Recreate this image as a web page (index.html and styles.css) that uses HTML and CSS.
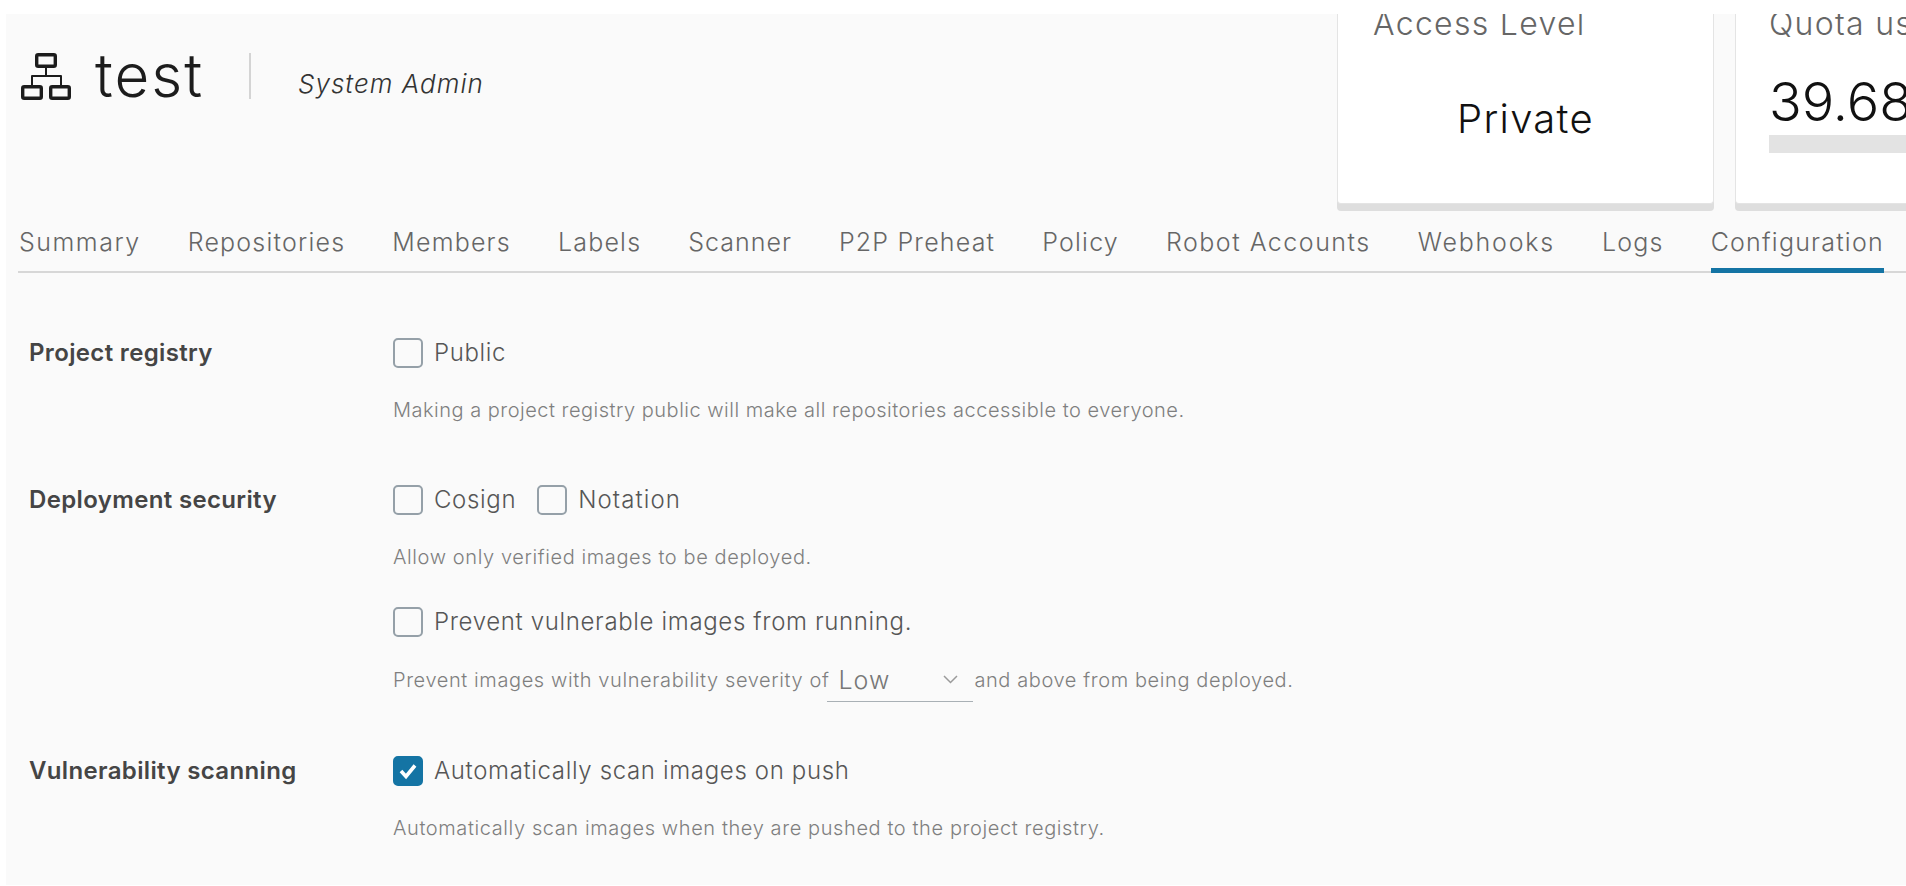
FILE: index.html
```html
<!DOCTYPE html>
<html lang="en">
<head>
<meta charset="utf-8">
<title>test - Configuration</title>
<link rel="stylesheet" href="styles.css">
</head>
<body>
<main class="panel">
  <header class="top">
    <div class="title">
      <svg class="project-icon" viewBox="0 0 50 47" fill="none" stroke="#1c1c1c" stroke-width="3.4" stroke-linejoin="round" aria-hidden="true">
        <rect x="15.7" y="1.7" width="18.6" height="11.6" rx="1.5"/>
        <rect x="1.7" y="33.7" width="18.6" height="11.6" rx="1.5"/>
        <rect x="29.7" y="33.7" width="18.6" height="11.6" rx="1.5"/>
        <path stroke-width="2" d="M25 15v8M11 32v-9h29v9"/>
      </svg>
      <h1 class="name">test</h1>
      <span class="divider"></span>
      <span class="role">System Admin</span>
    </div>
    <div class="cards">
      <article class="card card-access">
        <h2 class="card-title">Access Level</h2>
        <p class="card-value">Private</p>
      </article>
      <article class="card card-quota">
        <h2 class="card-title">Quota used</h2>
        <p class="quota-value">39.68MB of unlimited</p>
        <div class="quota-bar"></div>
      </article>
    </div>
  </header>
  <nav class="tabs">
    <a class="tab tab-wide">Summary</a>
    <a class="tab">Repositories</a>
    <a class="tab">Members</a>
    <a class="tab">Labels</a>
    <a class="tab tab-tight">Scanner</a>
    <a class="tab">P2P Preheat</a>
    <a class="tab">Policy</a>
    <a class="tab tab-wide">Robot Accounts</a>
    <a class="tab tab-wider">Webhooks</a>
    <a class="tab">Logs</a>
    <a class="tab active">Configuration</a>
  </nav>
  <form class="config">
    <section class="row row-registry">
      <div class="row-label">Project registry</div>
      <div class="row-body">
        <div class="checks">
          <label class="check"><span class="box"></span>Public</label>
        </div>
        <p class="help">Making a project registry public will make all repositories accessible to everyone.</p>
      </div>
    </section>
    <section class="row row-deploy">
      <div class="row-label">Deployment security</div>
      <div class="row-body">
        <div class="checks">
          <label class="check"><span class="box"></span>Cosign</label>
          <label class="check check-wide"><span class="box"></span>Notation</label>
        </div>
        <p class="help help-loose">Allow only verified images to be deployed.</p>
        <div class="checks checks-prevent">
          <label class="check"><span class="box"></span>Prevent vulnerable images from running.</label>
        </div>
        <p class="help help-loose help-inline">Prevent images with vulnerability severity of
          <span class="select"><span class="select-value">Low</span>
            <svg class="chevron" viewBox="0 0 15 9" fill="none" stroke="#9a9a9a" stroke-width="1.5" aria-hidden="true"><path d="M1 1l6.5 6.5L14 1"/></svg>
          </span>
          and above from being deployed.</p>
      </div>
    </section>
    <section class="row">
      <div class="row-label">Vulnerability scanning</div>
      <div class="row-body">
        <div class="checks">
          <label class="check"><span class="box box-on"><svg viewBox="0 0 30 30" fill="none" stroke="#fff" stroke-width="3.6" aria-hidden="true"><path d="M8 15l5 5.5L22 9.5"/></svg></span>Automatically scan images on push</label>
        </div>
        <p class="help help-loose">Automatically scan images when they are pushed to the project registry.</p>
      </div>
    </section>
  </form>
</main>
</body>
</html>
```

FILE: styles.css
```css
* { box-sizing: border-box; }
html, body { margin: 0; height: 100%; background: #fff; overflow: hidden; }
body { padding: 14px 0 1px 6px; font-family: Inter, "Liberation Sans", sans-serif; color: #565656; }
h1, h2, p { margin: 0; font-weight: inherit; }

.panel { height: 871px; background: #fafafa; overflow: hidden; }

.top { display: flex; justify-content: space-between; height: 200px; }
.title { display: flex; align-items: flex-start; padding: 39px 0 0 15px; }
.project-icon { width: 50px; height: 47px; flex: none; }
.name { font-size: 60px; line-height: 58px; font-weight: 300; letter-spacing: 2px; color: #1c1c1c; margin: -7px 0 0 24px; }
.divider { width: 2px; height: 46px; background: #d4d4d4; margin-left: 45px; }
.role { font-size: 26px; line-height: 30px; font-style: italic; font-weight: 300; letter-spacing: 1px; color: #333; margin: 16px 0 0 47px; }

.cards { display: flex; gap: 21px; flex: none; width: 569px; margin-top: -40px; }
.card { background: #fff; flex: none; height: 230px; border: 1px solid #e4e4e4; border-top: 0; border-radius: 4px; box-shadow: 0 7px 0 #dedede; }
.card-access { width: 377px; }
.card-quota { width: 400px; padding-left: 33px; }
.card-title { font-size: 32px; line-height: 34px; font-weight: 300; letter-spacing: 1.3px; color: #666; padding-top: 33px; }
.card-access .card-title { padding-left: 35px; }
.card-value { font-size: 40px; line-height: 48px; font-weight: 300; letter-spacing: 1.3px; color: #111; text-align: center; margin-top: 54px; }
.quota-value { font-size: 54px; line-height: 60px; font-weight: 300; color: #111; margin-top: 31px; white-space: nowrap; }
.quota-bar { height: 18px; width: 400px; background: #e3e3e3; margin-top: 3px; }

.tabs { display: flex; gap: 47px; margin-left: 12px; padding-left: 1px; height: 59px; border-bottom: 2px solid #d7d7d7; }
.tab { font-size: 25px; line-height: 30px; font-weight: 300; letter-spacing: 1.2px; color: #666; padding-top: 13px; height: 59px; border-bottom: 5px solid transparent; white-space: nowrap; }
.tab-tight { letter-spacing: 1px; }
.tab-wide { letter-spacing: 1.5px; }
.tab-wider { letter-spacing: 1.8px; }
.tab.active { border-bottom-color: #1474a4; }

.config { display: flex; flex-direction: column; gap: 62px; padding: 65px 0 0 23px; }
.row { display: flex; }
.row-label { width: 364px; flex: none; font-size: 24px; line-height: 30px; font-weight: 600; letter-spacing: .35px; color: #454545; }
.row-body { display: flex; flex-direction: column; }
.checks { display: flex; gap: 21px; }
.checks-prevent { margin-top: 37px; }
.check { display: flex; align-items: center; gap: 11px; font-size: 24px; line-height: 30px; font-weight: 300; letter-spacing: .65px; color: #565656; }
.check-wide { letter-spacing: 1.1px; }
.box { width: 30px; height: 30px; border: 2px solid #95a0a8; border-radius: 5px; flex: none; background: #fafafa; }
.box-on { background: #1474a4; border-color: #1474a4; }
.box-on svg { display: block; width: 30px; height: 30px; margin: -2px; }
.help { font-size: 20px; line-height: 26px; font-weight: 300; letter-spacing: .5px; color: #7f7f7f; margin-top: 29px; white-space: nowrap; }
.help-loose { letter-spacing: .6px; }
.help-inline { margin-top: 30px; margin-bottom: -8px; display: flex; align-items: flex-start; }
.select { display: inline-flex; justify-content: space-between; align-items: flex-start; width: 146px; height: 35px; border-bottom: 1px solid #a9b0b5; padding: 0 15px 0 11px; margin: 0 1px 0 -2px; flex: none; }
.select-value { font-size: 25px; line-height: 26px; letter-spacing: 1px; color: #777; }
.chevron { width: 15px; height: 9px; margin-top: 8px; }
```
